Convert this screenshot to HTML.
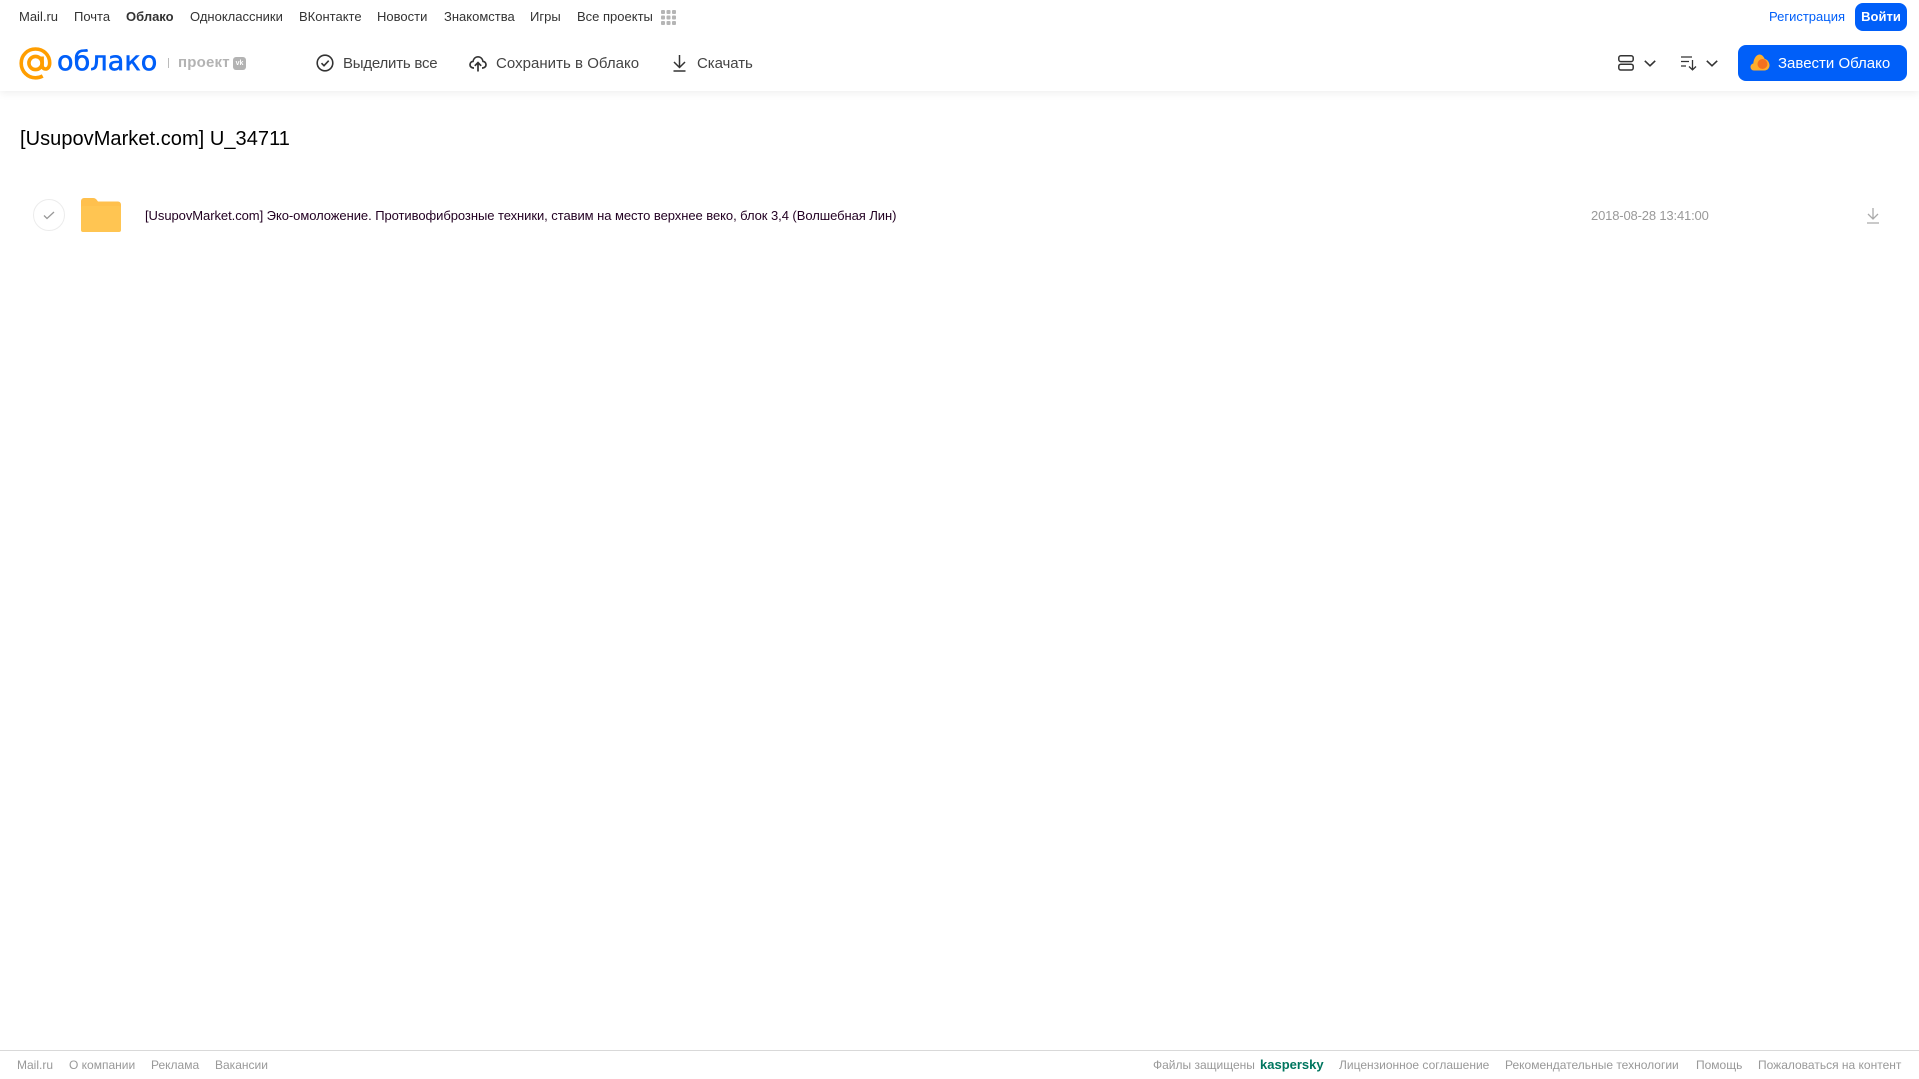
<!DOCTYPE html>
<html lang="ru"><head><meta charset="utf-8"><title>Облако</title>
<style>
html,body{margin:0;padding:0;background:#fff;width:1919px;height:1079px;overflow:hidden}
body{font-family:"Liberation Sans",Arial,sans-serif;position:relative}
.t{position:absolute;white-space:nowrap;line-height:16px}
.n{top:9px;font-size:13px;color:#333}
.h{top:56px;font-size:15px;color:#444;line-height:16px}
.f{top:1057px;font-size:12px;color:#999}
svg{position:absolute;overflow:visible}
</style></head><body>
<div style="position:absolute;left:0;top:0;width:1919px;height:91px;background:#fff;box-shadow:0 2px 8px rgba(0,0,0,.07)"></div>

<span class="t n" style="left:19px">Mail.ru</span>
<span class="t n" style="left:74px">Почта</span>
<span class="t n" style="left:126px;font-weight:bold">Облако</span>
<span class="t n" style="left:190px">Одноклассники</span>
<span class="t n" style="left:299px">ВКонтакте</span>
<span class="t n" style="left:377px">Новости</span>
<span class="t n" style="left:444px">Знакомства</span>
<span class="t n" style="left:530px">Игры</span>
<span class="t n" style="left:577px">Все проекты</span>
<svg style="left:661px;top:10px" width="15" height="15" fill="#b5b5b5"><rect x="0" y="0" width="4" height="4" rx="1"/><rect x="5.500" y="0" width="4" height="4" rx="1"/><rect x="11" y="0" width="4" height="4" rx="1"/><rect x="0" y="5.500" width="4" height="4" rx="1"/><rect x="5.500" y="5.500" width="4" height="4" rx="1"/><rect x="11" y="5.500" width="4" height="4" rx="1"/><rect x="0" y="11" width="4" height="4" rx="1"/><rect x="5.500" y="11" width="4" height="4" rx="1"/><rect x="11" y="11" width="4" height="4" rx="1"/></svg>

<span class="t n" style="left:1769px;color:#005ff9">Регистрация</span>
<div style="position:absolute;left:1855px;top:3px;width:52px;height:28px;border-radius:8px;background:#005ff9;color:#fff;font-size:13px;font-weight:bold;line-height:28px;text-align:center">Войти</div>

<svg style="left:19px;top:47px" width="33" height="33" viewBox="0 0 33 33" fill="none" stroke="#ff9e00" stroke-width="3.600"><circle cx="16.500" cy="16" r="6.600"/><path d="M23.100 9.500v8.500c0 2.600 1.500 4 3.400 4 2.300 0 4.200-2.300 4.200-6 0-8-6.200-14-14.200-14S2.200 8.200 2.200 16.200 8.500 30.800 16.500 30.800c2.800 0 5-.6 7.200-1.800"/></svg>
<span class="t" style="left:57px;top:46px;font-family:'DejaVu Sans',sans-serif;font-size:27px;line-height:32px;color:#005ff9;letter-spacing:.1px;-webkit-text-stroke:.6px #005ff9">облако</span>
<div style="position:absolute;left:168px;top:58px;width:1px;height:10px;background:#bbb"></div>
<span class="t" style="left:178px;top:55px;font-size:15px;font-weight:bold;color:#b3b3b3;letter-spacing:.2px">проект</span>
<div style="position:absolute;left:233px;top:57px;width:13px;height:13px;border-radius:3px;background:#b3b3b3;color:#fff;font-size:7px;font-weight:bold;line-height:13px;text-align:center">vk</div>

<svg style="left:316px;top:54px" width="18" height="18" fill="none" stroke="#333" stroke-width="1.600"><circle cx="9" cy="9" r="7.800"/><path d="M5.500 9.200l2.500 2.500 4.700-5"/></svg>
<span class="t h" style="left:343px;letter-spacing:-.22px">Выделить все</span>
<svg style="left:469px;top:54px" width="18" height="18" fill="none" stroke="#333" stroke-width="1.700"><path d="M5 14H4.500C2.500 14 1 12.500 1 10.700 1 9 2.300 7.600 4 7.400 4.500 4.700 6.500 2.800 9 2.800s4.500 1.900 5 4.600c1.700.2 3 1.600 3 3.300 0 1.800-1.500 3.300-3.500 3.300H13"/><path d="M9 17.500V9M5.800 11.800L9 8.600l3.200 3.200"/></svg>
<span class="t h" style="left:496px;letter-spacing:.03px">Сохранить в Облако</span>
<svg style="left:672px;top:54px" width="15" height="18" fill="none" stroke="#333" stroke-width="1.500"><path d="M7.500 1v12M2 8l5.500 5.500L13 8M1.500 17h12"/></svg>
<span class="t h" style="left:697px;letter-spacing:-.07px">Скачать</span>

<svg style="left:1618px;top:55px" width="16" height="16" fill="none" stroke="#333" stroke-width="1.500"><rect x=".8" y=".8" width="14.400" height="5.800" rx="2"/><rect x=".8" y="9.200" width="14.400" height="5.800" rx="2"/></svg>
<svg style="left:1644px;top:60px" width="12" height="7" fill="none" stroke="#333" stroke-width="1.600"><path d="M.8.800L6 5.800 11.200.800"/></svg>
<svg style="left:1681px;top:56px" width="16" height="15" fill="none" stroke="#333" stroke-width="1.300"><path d="M0 1h11M0 5.500h8M0 10h5M11.500 4v9.500M8 10.500l3.500 3.300 3.500-3.300"/></svg>
<svg style="left:1706px;top:60px" width="12" height="7" fill="none" stroke="#333" stroke-width="1.600"><path d="M.8.800L6 5.800 11.200.800"/></svg>

<div style="position:absolute;left:1738px;top:45px;width:169px;height:36px;border-radius:8px;background:#005ff9"></div>
<svg style="left:1750px;top:54px" width="20" height="18"><path d="M4 16.500C1.800 16.500.5 14.800.5 13 .5 11 1.800 9.800 3.300 9.500 3.500 5.500 6 .5 9.500 .5c2.500 0 4.300 2.300 5.200 4.500 2.800.2 4.800 3.700 4.800 6.300 0 2.900-2.200 5.200-5 5.200z" fill="#ffae2b"/><circle cx="12.500" cy="10" r="5" fill="#f5701f"/></svg>
<span class="t" style="left:1778px;top:56px;font-size:15px;line-height:16px;color:#fff">Завести Облако</span>

<span class="t" style="left:20px;top:127px;font-size:20px;line-height:24px;color:#000;letter-spacing:.05px">[UsupovMarket.com] U_34711</span>

<div style="position:absolute;left:33px;top:199px;width:30px;height:30px;border:1px solid #ececec;border-radius:50%"></div>
<svg style="left:43px;top:211px" width="12" height="9" fill="none" stroke="#999" stroke-width="1.300"><path d="M1 4.500l3 3L11 1"/></svg>
<svg style="left:81px;top:198px" width="40" height="34"><path d="M0 3a3 3 0 0 1 3-3h9c2 0 3 .8 4 2.200L17 3.500h20a3 3 0 0 1 3 3V31a3 3 0 0 1-3 3H3a3 3 0 0 1-3-3z" fill="#ffc04d"/><rect x="0" y="8" width="40" height="26" rx="2" fill="#ffc552"/></svg>
<span class="t" style="left:145px;top:208px;font-size:13px;color:#220022;letter-spacing:-.06px">[UsupovMarket.com] Эко-омоложение. Противофиброзные техники, ставим на место верхнее веко, блок 3,4 (Волшебная Лин)</span>
<span class="t" style="left:1591px;top:208px;font-size:13px;color:#999;letter-spacing:-.16px">2018-08-28 13:41:00</span>
<svg style="left:1866px;top:207px" width="14" height="17" fill="none" stroke="#aaa" stroke-width="1.300"><path d="M7 1v11M2 7l5 5 5-5M1 16h12"/></svg>

<div style="position:absolute;left:0;top:1050px;width:1919px;height:1px;background:#d9d9d9"></div>
<span class="t f" style="left:17px">Mail.ru</span>
<span class="t f" style="left:69px">О компании</span>
<span class="t f" style="left:151px">Реклама</span>
<span class="t f" style="left:215px">Вакансии</span>
<span class="t f" style="left:1153px">Файлы защищены</span>
<span class="t f" style="left:1260px;color:#00765f;font-weight:bold;font-size:13px">kaspersky</span>
<span class="t f" style="left:1339px">Лицензионное соглашение</span>
<span class="t f" style="left:1505px">Рекомендательные технологии</span>
<span class="t f" style="left:1696px">Помощь</span>
<span class="t f" style="left:1758px">Пожаловаться на контент</span>
</body></html>
